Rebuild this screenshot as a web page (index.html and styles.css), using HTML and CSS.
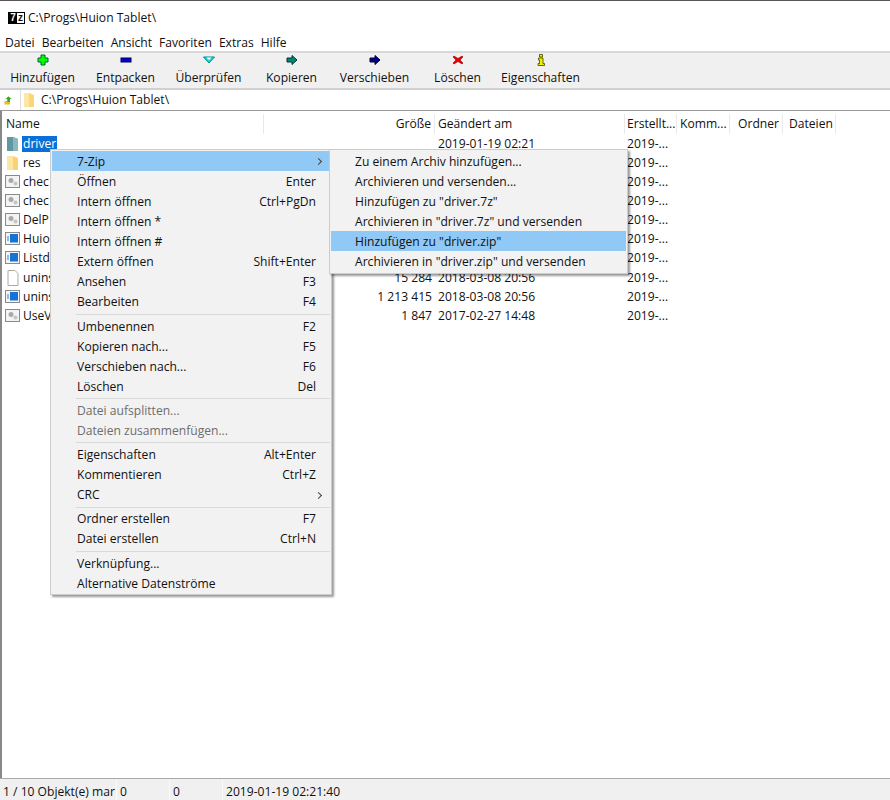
FILE: index.html
```html
<!DOCTYPE html>
<html lang="de">
<head>
<meta charset="utf-8">
<title>7-Zip</title>
<link rel="stylesheet" href="styles.css">
</head>
<body>
<div class="app">
  <div class="titlebar">
    <span class="logo"><span class="logo-7">7</span><span class="logo-z">z</span></span>
    <span>C:\Progs\Huion Tablet\</span>
  </div>
  <nav class="menubar">
    <span>Datei</span><span>Bearbeiten</span><span>Ansicht</span><span>Favoriten</span><span>Extras</span><span>Hilfe</span>
  </nav>
  <div class="toolbar">
    <div class="tool"><svg viewBox="0 0 12 12"><path d="M4 1h4v3h3v4H8v3H4V8H1V4h3z" fill="#0f0" stroke="#063" stroke-width="1"/></svg><span>Hinzufügen</span></div>
    <div class="tool"><svg viewBox="0 0 12 12"><rect x="1" y="4" width="10" height="4" fill="#00d" stroke="#005"/></svg><span>Entpacken</span></div>
    <div class="tool"><svg viewBox="0 0 12 12"><path d="M0.5 3h11L6 9z" fill="#1dd" stroke="#088"/><path d="M3.5 3.5L6 6l2.500-2.500z" fill="#fff"/></svg><span>Überprüfen</span></div>
    <div class="tool"><svg viewBox="0 0 12 12"><path d="M1 4h5V1.500L11 6l-5 4.500V8H1z" fill="#087" stroke="#033"/></svg><span>Kopieren</span></div>
    <div class="tool"><svg viewBox="0 0 12 12"><path d="M1 4h5V1.500L11 6l-5 4.500V8H1z" fill="#008" stroke="#003"/></svg><span>Verschieben</span></div>
    <div class="tool"><svg viewBox="0 0 12 12"><path d="M2 2l4 2.500L10 2l1 1-3 3 3 3-1 1-4-2.500L2 10 1 9l3-3-3-3z" fill="#e00" stroke="#800" stroke-width=".6"/></svg><span>Löschen</span></div>
    <div class="tool"><svg viewBox="0 0 12 12"><path d="M4.500 0.500h3v2.500h-3zM3.500 4h4.500v5.500h1.500V11.500H3V9.500h1.500V6h-1z" fill="#ee0" stroke="#440" stroke-width=".8"/></svg><span>Eigenschaften</span></div>
  </div>
  <div class="addressbar">
    <svg class="up" viewBox="0 0 9 9"><path d="M0.500 8.500V5h2.500V3H1.500L4.500 0.500 7.500 3H6v5.500z" fill="#e4c020"/><path d="M4.500 0.500L7.500 3H6v3H3.500V3H1.500z" fill="#3a3"/></svg>
    <div class="path">
      <svg class="pfolder" viewBox="0 0 10 14"><path d="M0 0h5l5 2v12H0z" fill="#fad776"/><path d="M0 0h5v14H0z" fill="#fce7a5"/></svg>
      <span>C:\Progs\Huion Tablet\</span>
    </div>
  </div>
  <main class="list">
    <div class="row head">
      <span class="c name">Name</span>
      <span class="c size">Größe</span>
      <span class="c mod">Geändert am</span>
      <span class="c cre">Erstellt...</span>
      <span class="c com">Komm...</span>
      <span class="c ord">Ordner</span>
      <span class="c dat">Dateien</span>
    </div>
    <div class="row">
      <span class="c name"><svg class="ico" viewBox="0 0 16 16"><use href="#i-dark"/></svg><span class="sel">driver</span></span>
      <span class="c size"></span><span class="c mod">2019-01-19 02:21</span><span class="c cre">2019-...</span>
    </div>
    <div class="row">
      <span class="c name"><svg class="ico" viewBox="0 0 16 16"><use href="#i-folder"/></svg><span class="fn">res</span></span>
      <span class="c size"></span><span class="c mod"></span><span class="c cre">2019-...</span>
    </div>
    <div class="row">
      <span class="c name"><svg class="ico" viewBox="0 0 16 16"><use href="#i-gear"/></svg><span class="fn">chec</span></span>
      <span class="c size"></span><span class="c mod"></span><span class="c cre">2019-...</span>
    </div>
    <div class="row">
      <span class="c name"><svg class="ico" viewBox="0 0 16 16"><use href="#i-gear"/></svg><span class="fn">chec</span></span>
      <span class="c size"></span><span class="c mod"></span><span class="c cre">2019-...</span>
    </div>
    <div class="row">
      <span class="c name"><svg class="ico" viewBox="0 0 16 16"><use href="#i-gear"/></svg><span class="fn">DelP</span></span>
      <span class="c size"></span><span class="c mod"></span><span class="c cre">2019-...</span>
    </div>
    <div class="row">
      <span class="c name"><svg class="ico" viewBox="0 0 16 16"><use href="#i-app"/></svg><span class="fn">Huio</span></span>
      <span class="c size"></span><span class="c mod"></span><span class="c cre">2019-...</span>
    </div>
    <div class="row">
      <span class="c name"><svg class="ico" viewBox="0 0 16 16"><use href="#i-app"/></svg><span class="fn">Listd</span></span>
      <span class="c size"></span><span class="c mod"></span><span class="c cre">2019-...</span>
    </div>
    <div class="row">
      <span class="c name"><svg class="ico" viewBox="0 0 16 16"><use href="#i-file"/></svg><span class="fn">unins</span></span>
      <span class="c size">15 284</span><span class="c mod">2018-03-08 20:56</span><span class="c cre">2019-...</span>
    </div>
    <div class="row">
      <span class="c name"><svg class="ico" viewBox="0 0 16 16"><use href="#i-app"/></svg><span class="fn">unins</span></span>
      <span class="c size">1 213 415</span><span class="c mod">2018-03-08 20:56</span><span class="c cre">2019-...</span>
    </div>
    <div class="row">
      <span class="c name"><svg class="ico" viewBox="0 0 16 16"><use href="#i-gear"/></svg><span class="fn">UseV</span></span>
      <span class="c size">1 847</span><span class="c mod">2017-02-27 14:48</span><span class="c cre">2019-...</span>
    </div>
  </main>
  <footer class="status">
    <span class="s1">1 / 10 Objekt(e) mar</span><span class="s2">0</span><span class="s3">0</span><span class="s4">2019-01-19 02:21:40</span>
  </footer>
</div>

<div class="menu main-menu">
  <div class="item active"><span>7-Zip</span><i class="arrow"></i></div>
  <div class="item"><span>Öffnen</span><kbd>Enter</kbd></div>
  <div class="item"><span>Intern öffnen</span><kbd>Ctrl+PgDn</kbd></div>
  <div class="item"><span>Intern öffnen *</span></div>
  <div class="item"><span>Intern öffnen #</span></div>
  <div class="item"><span>Extern öffnen</span><kbd>Shift+Enter</kbd></div>
  <div class="item"><span>Ansehen</span><kbd>F3</kbd></div>
  <div class="item"><span>Bearbeiten</span><kbd>F4</kbd></div>
  <hr>
  <div class="item"><span>Umbenennen</span><kbd>F2</kbd></div>
  <div class="item"><span>Kopieren nach...</span><kbd>F5</kbd></div>
  <div class="item"><span>Verschieben nach...</span><kbd>F6</kbd></div>
  <div class="item"><span>Löschen</span><kbd>Del</kbd></div>
  <hr>
  <div class="item off"><span>Datei aufsplitten...</span></div>
  <div class="item off"><span>Dateien zusammenfügen...</span></div>
  <hr>
  <div class="item"><span>Eigenschaften</span><kbd>Alt+Enter</kbd></div>
  <div class="item"><span>Kommentieren</span><kbd>Ctrl+Z</kbd></div>
  <div class="item"><span>CRC</span><i class="arrow"></i></div>
  <hr>
  <div class="item"><span>Ordner erstellen</span><kbd>F7</kbd></div>
  <div class="item"><span>Datei erstellen</span><kbd>Ctrl+N</kbd></div>
  <hr>
  <div class="item"><span>Verknüpfung...</span></div>
  <div class="item"><span>Alternative Datenströme</span></div>
</div>

<div class="menu sub-menu">
  <div class="item"><span>Zu einem Archiv hinzufügen...</span></div>
  <div class="item"><span>Archivieren und versenden...</span></div>
  <div class="item"><span>Hinzufügen zu "driver.7z"</span></div>
  <div class="item"><span>Archivieren in "driver.7z" und versenden</span></div>
  <div class="item active"><span>Hinzufügen zu "driver.zip"</span></div>
  <div class="item"><span>Archivieren in "driver.zip" und versenden</span></div>
</div>

<svg class="defs" width="0" height="0">
  <defs>
    <g id="i-dark"><path d="M2 1h6l5 2v12H2z" fill="#4f8a97"/><path d="M2 1h6v14H2z" fill="#5f97a3"/><path d="M8 1l5 2v12H8z" fill="#8fb6bd"/></g>
    <g id="i-folder"><path d="M2 1h6l5 2v12H2z" fill="#f9d36e"/><path d="M2 1h6v14H2z" fill="#fde6a3"/></g>
    <g id="i-gear"><rect x="0.500" y="1.500" width="14" height="12" fill="#f4f4f4" stroke="#8a8a8a"/><circle cx="6" cy="6.500" r="2.500" fill="#a9a9a9"/><circle cx="10.500" cy="9.500" r="2" fill="#c4c4c4"/></g>
    <g id="i-app"><rect x="0.500" y="1.500" width="14" height="12" fill="#f4f4f4" stroke="#8a8a8a"/><rect x="5" y="3" width="8" height="8.500" fill="#1573d6"/><rect x="2" y="5" width="2" height="5" fill="#9fb8d3"/></g>
    <g id="i-file"><path d="M3 .5h7l3 3V15.500H3z" fill="#fff" stroke="#aaa"/></g>
  </defs>
</svg>
</body>
</html>
```
FILE: styles.css
```css
* { box-sizing: border-box; }
html, body { margin: 0; height: 100%; }
body {
  font: 12.1px/16px "Open Sans", "Liberation Sans", sans-serif;
  color: #111;
  background: #fff;
  overflow: hidden;
  position: relative;
}
.app {
  width: 890px; height: 800px;
  display: flex; flex-direction: column;
  border-top: 1px solid #555;
}
.titlebar { height: 33px; display: flex; align-items: center; gap: 3px; padding: 0 8px; flex: none; }
.logo {
  display: inline-flex; justify-content: space-between; width: 17px; height: 12px; border: 1px solid #000;
  font: bold 10px/10px "Liberation Sans", sans-serif; background: #fff;
}
.logo-7 { background: #000; color: #fff; width: 8px; text-align: center; }
.logo-z { width: 7px; text-align: center; }
.menubar { height: 17px; flex: none; display: flex; gap: 7px; padding: 0 5px; align-items: center; }
.toolbar {
  height: 39px; flex: none; background: #f0f0f0;
  border-top: 2px solid #d8d8d8; border-bottom: 2px solid #d0d0d0;
  display: flex; padding-left: 1px;
}
.tool { display: flex; flex-direction: column; align-items: center; width: 83px; flex: none; padding-top: 1px; }
.tool svg { width: 12px; height: 12px; margin-bottom: 4px; }
.addressbar { height: 21px; flex: none; display: flex; align-items: center; padding-left: 4px; gap: 7px; border-bottom: 1px solid #999; }
.up { width: 9px; height: 9px; flex: none; }
.path { display: flex; align-items: center; gap: 7px; flex: 1; padding-left: 3px; border-left: 1px solid #ddd; height: 100%; }
.pfolder { width: 10px; height: 14px; }
.list { flex: 1; min-height: 0; padding-top: 3px; border-left: 2px solid #888; }
.row { display: grid; grid-template-columns: 262px 171px 190px 52px 53px 53px 53px; height: 19.15px; align-items: center; }
.head { height: 20px; }
.head .c { height: 100%; border-right: 1px solid #e9e9e9; line-height: 19px; }
.c { padding: 0 3px; white-space: nowrap; overflow: hidden; }
.name { padding-left: 3px; display: flex; align-items: center; gap: 1px; overflow: visible; }
.head .name { display: block; padding-left: 4px; }
.size { text-align: right; }
.cre { padding-left: 2px; }
.ord { text-align: right; }
.dat { padding-left: 6px; }
.ico { width: 16px; height: 16px; flex: none; }
.sel { background: #0a6fd6; color: #fff; padding: 0 1px; }
.fn { padding: 0 1px; }
.status {
  height: 22px; flex: none; display: flex; align-items: center;
  background: #f0f0f0; border-top: 1px solid #aaa;
}
.status span { display: block; padding-left: 3px; height: 100%; line-height: 25px; border-right: 1px solid #fafafa; white-space: nowrap; overflow: hidden; }
.status .s4 { border-right: 0; }
.s1 { width: 117px; }
.s2, .s3 { width: 53px; }
.s4 { width: 170px; }
.menu {
  position: absolute; background: #f2f2f2;
  border: 1px solid #ccc; box-shadow: 2px 2px 2px rgba(0,0,0,.4);
  padding: 1px;
}
.main-menu { left: 50px; top: 149px; width: 282px; }
.sub-menu { left: 329px; top: 149px; width: 299px; }
.item { height: 20.1px; display: flex; justify-content: space-between; align-items: center; padding: 1.500px 14px 0 25px; }
.item.active { background: #90c8f6; }
.item.off { color: #6d6d6d; }
.sub-menu .item { padding-left: 24px; }
.arrow { width: 5px; height: 5px; border-top: 1px solid #444; border-right: 1px solid #444; transform: rotate(45deg); margin-right: -5px; }
kbd { font: inherit; }
hr { height: 1px; border: 0; background: #d9d9d9; margin: 2px 0 1px 24px; }
.defs { position: absolute; }
```
